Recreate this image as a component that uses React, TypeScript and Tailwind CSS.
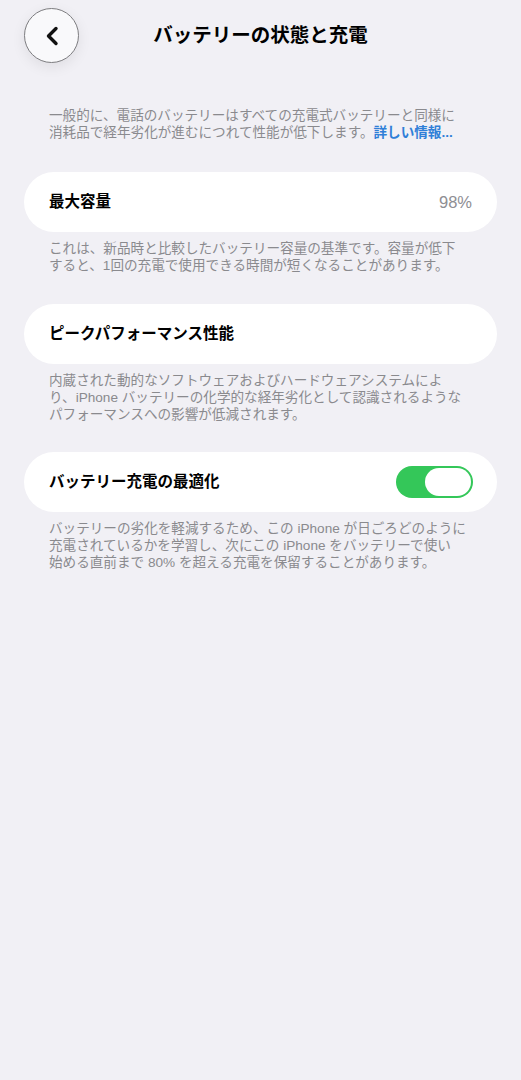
import React from "react";

const FONT = { fontFamily: '"Liberation Sans", "Noto Sans CJK JP", sans-serif' };

function Footer({ lines }: { lines: string[] }) {
  return (
    <p className="px-[25px] pt-[8px] text-[13.6px] leading-[17px] text-[#8a8a8e]">
      {lines.map((l) => (
        <span key={l} className="block whitespace-nowrap">
          {l}
        </span>
      ))}
    </p>
  );
}

function Row({ label, children }: { label: string; children?: React.ReactNode }) {
  return (
    <div className="flex h-[60px] items-center justify-between rounded-full bg-white pl-[25px] pr-[25px]">
      <span className="text-[15.5px] font-bold text-black">{label}</span>
      {children}
    </div>
  );
}

export default function App() {
  return (
    <div style={FONT} className="min-h-[1080px] w-full bg-[#f1f0f5] px-6">
      <div className="flex items-center pt-[8px]">
        <button className="flex h-[55px] w-[55px] shrink-0 items-center justify-center rounded-full border border-[#7d7d80] bg-[#f9f9fb] shadow-[0_4px_14px_rgba(0,0,0,0.08)]">
          <svg width="14" height="20" viewBox="0 0 14 20" fill="none">
            <path d="M11 2.5 L3.5 10 L11 17.5" stroke="#111" strokeWidth="3.4" strokeLinecap="round" strokeLinejoin="round" />
          </svg>
        </button>
        <h1 className="flex-1 text-center text-[19.5px] font-bold text-black">バッテリーの状態と充電</h1>
        <div className="w-[55px] shrink-0" />
      </div>

      <p className="mt-[44px] px-[25px] text-[13.6px] leading-[17px] text-[#8a8a8e]">
        <span className="block whitespace-nowrap">一般的に、電話のバッテリーはすべての充電式バッテリーと同様に</span>
        <span className="block whitespace-nowrap">
          消耗品で経年劣化が進むにつれて性能が低下します。
          <span className="font-semibold text-[#2f7fd8]">詳しい情報...</span>
        </span>
      </p>

      <div className="mt-[31px]">
        <Row label="最大容量">
          <span className="text-[16.5px] text-[#8e8e93]">98%</span>
        </Row>
        <Footer
          lines={[
            "これは、新品時と比較したバッテリー容量の基準です。容量が低下",
            "すると、1回の充電で使用できる時間が短くなることがあります。",
          ]}
        />
      </div>

      <div className="mt-[30px]">
        <Row label="ピークパフォーマンス性能" />
        <Footer
          lines={[
            "内蔵された動的なソフトウェアおよびハードウェアシステムによ",
            "り、iPhone バッテリーの化学的な経年劣化として認識されるような",
            "パフォーマンスへの影響が低減されます。",
          ]}
        />
      </div>

      <div className="mt-[29px]">
        <Row label="バッテリー充電の最適化">
          <div className="-mr-[1px] flex h-[32px] w-[77px] items-center justify-end rounded-full bg-[#34c759] px-[2px]">
            <div className="h-[28px] w-[46px] rounded-full bg-white" />
          </div>
        </Row>
        <Footer
          lines={[
            "バッテリーの劣化を軽減するため、この iPhone が日ごろどのように",
            "充電されているかを学習し、次にこの iPhone をバッテリーで使い",
            "始める直前まで 80% を超える充電を保留することがあります。",
          ]}
        />
      </div>
    </div>
  );
}
